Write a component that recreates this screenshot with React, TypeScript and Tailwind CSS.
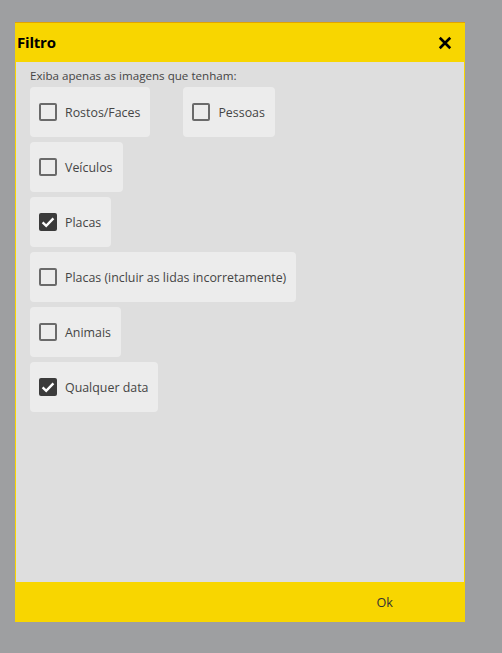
import { useState } from "react";

type Option = { id: string; label: string };

const rows: Option[][] = [
  [
    { id: "faces", label: "Rostos/Faces" },
    { id: "pessoas", label: "Pessoas" },
  ],
  [{ id: "veiculos", label: "Veículos" }],
  [{ id: "placas", label: "Placas" }],
  [{ id: "placasAll", label: "Placas (incluir as lidas incorretamente)" }],
  [{ id: "animais", label: "Animais" }],
  [{ id: "data", label: "Qualquer data" }],
];

function CheckOption({ label, checked, onToggle }: { label: string; checked: boolean; onToggle: () => void }) {
  return (
    <button
      onClick={onToggle}
      className="h-[50px] flex items-center gap-[8px] pl-[9px] pr-[10px] bg-[#ececec] rounded-[4px] text-[12.4px] text-[#454545]"
    >
      <span
        className={`w-[18px] h-[18px] rounded-[2px] flex items-center justify-center ${
          checked ? "bg-[#3b3b3b]" : "border-2 border-[#6a6a6a]"
        }`}
      >
        {checked && (
          <svg viewBox="0 0 18 18" className="w-[18px] h-[18px]">
            <path d="M3.6 9.4l3.6 3.4L14.4 5.4" fill="none" stroke="#fff" strokeWidth="2.4" />
          </svg>
        )}
      </span>
      <span className="pt-[3px]">{label}</span>
    </button>
  );
}

export default function App() {
  const [checked, setChecked] = useState<Record<string, boolean>>({ placas: true, data: true });

  return (
    <div
      className="w-[502px] h-[653px] bg-[#9e9fa1] pt-[22px] pl-[15px]"
      style={{ fontFamily: '"Open Sans", "Noto Sans", sans-serif' }}
    >
      <div className="w-[450px] h-[600px] flex flex-col border-t border-[#e2a400]">
        <div className="h-[39px] bg-[#f8d600] flex items-center justify-between pl-[2px] pr-[13px]">
          <h3 className="text-[15px] font-bold text-black tracking-[-0.2px]">Filtro</h3>
          <button>
            <svg viewBox="0 0 16 16" className="w-[14px] h-[14px]">
              <path d="M2 2l12 12M14 2L2 14" stroke="#000" strokeWidth="3" />
            </svg>
          </button>
        </div>

        <div className="flex-1 bg-[#dedede] border-x border-[#f8d600] pl-[14px] pt-[5px]">
          <p className="text-[11.6px] text-[#454545] leading-[18px]">Exiba apenas as imagens que tenham:</p>
          <div className="flex flex-col gap-[5px] mt-[2px]">
            {rows.map((row, i) => (
              <div key={i} className="flex gap-[33px]">
                {row.map((o) => (
                  <CheckOption
                    key={o.id}
                    label={o.label}
                    checked={!!checked[o.id]}
                    onToggle={() => setChecked((c) => ({ ...c, [o.id]: !c[o.id] }))}
                  />
                ))}
              </div>
            ))}
          </div>
        </div>

        <div className="h-[40px] bg-[#f8d600] flex items-center justify-end pr-[72px] pt-[2px]">
          <button className="text-[12.6px] text-[#333]">Ok</button>
        </div>
      </div>
    </div>
  );
}
